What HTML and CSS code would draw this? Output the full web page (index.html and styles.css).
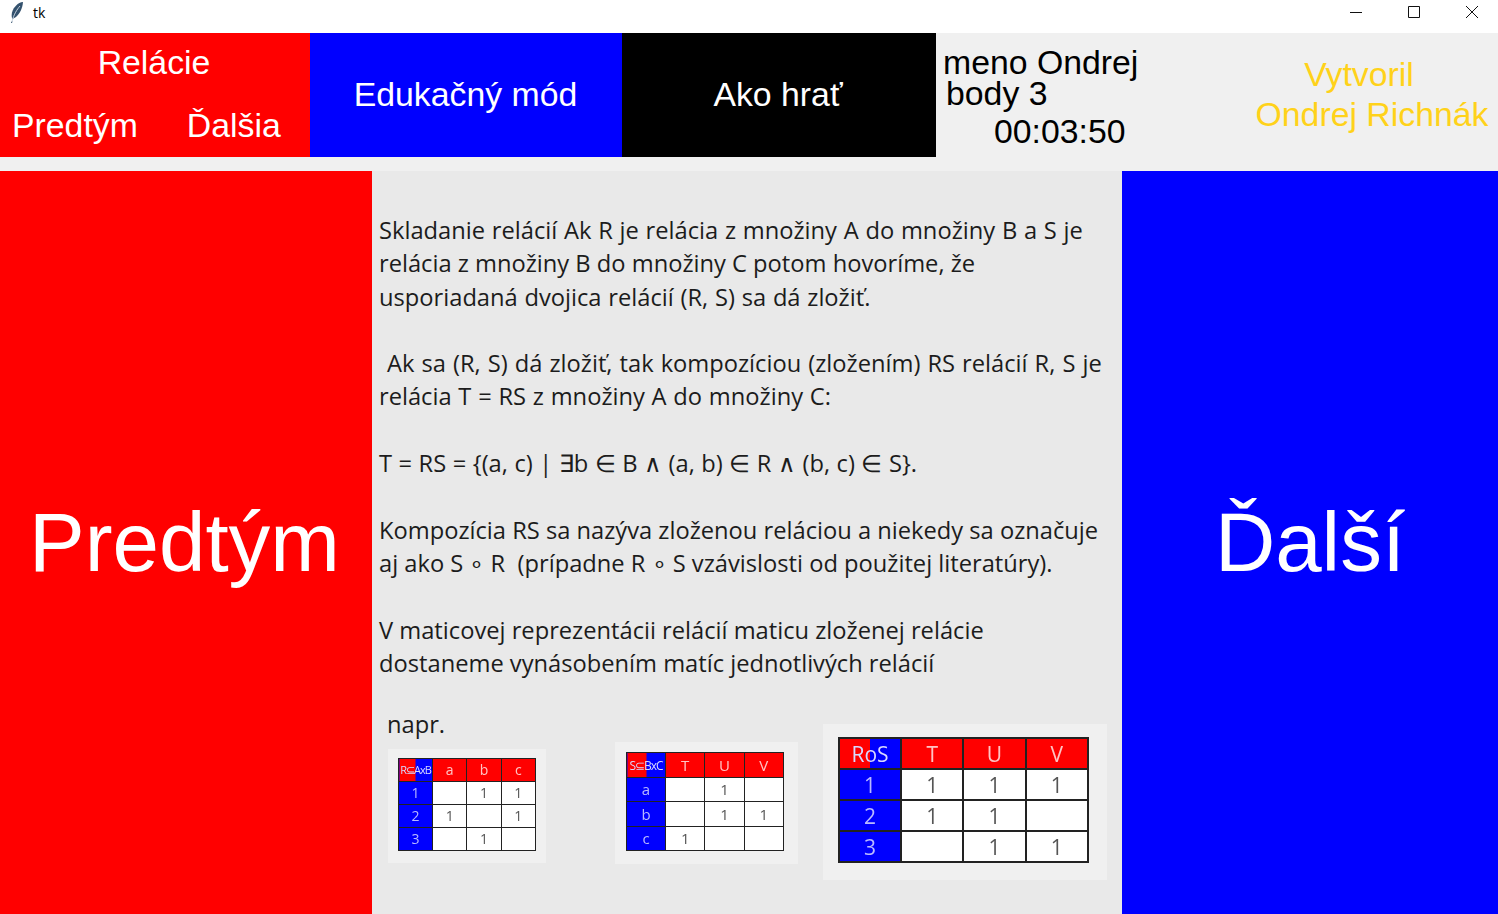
FILE: index.html
```html
<!DOCTYPE html>
<html>
<head>
    <title>tk</title>
    <meta name="viewport" content="width=device-width, initial-scale=1">
    <link rel="stylesheet" href="styles.css">
</head>
<body>
    <div class="titlebar">
        <div class="title-left">
            <svg class="feather" width="16" height="22" viewBox="0 0 16 22">
                <path d="M14 1C9 1.500 4.500 6 3 11.500C2.500 14 2.500 16.500 3.500 18L7 16C11 12.500 13.500 7 14 1Z" fill="#34526e"/>
                <path d="M11 5C8 8.500 5 13 3 20.500" stroke="#c8d4e0" stroke-width="1" fill="none"/>
                <path d="M3 20.500L2.500 22" stroke="#34526e" stroke-width="1" fill="none"/>
            </svg>
            <span>tk</span>
        </div>
        <div class="window-buttons">
            <svg width="14" height="14" viewBox="0 0 14 14"><path d="M1 7.500H13" stroke="#111" fill="none"/></svg>
            <svg width="14" height="14" viewBox="0 0 14 14"><path d="M1.500 1.500H12.500V12.500H1.500Z" stroke="#111" fill="none"/></svg>
            <svg width="14" height="14" viewBox="0 0 14 14"><path d="M1 1L13 13M13 1L1 13" stroke="#111" fill="none"/></svg>
        </div>
    </div>

    <div class="topbar">
        <div class="nav-cell red">
            <div class="nav-title">Relácie</div>
            <div class="nav-links">
                <span>Predtým</span>
                <span>Ďalšia</span>
            </div>
        </div>
        <div class="mode-cell mode-edu blue">Edukačný mód</div>
        <div class="mode-cell mode-help black">Ako hrať</div>
        <div class="player">
            <div>meno Ondrej</div>
            <div class="player-points">body 3</div>
            <div class="player-time">00:03:50</div>
        </div>
        <div class="author">
            <div class="author-first">Vytvoril</div>
            <div>Ondrej Richnák</div>
        </div>
    </div>

    <div class="main">
        <div class="side-button side-prev red">Predtým</div>
        <div class="content">
            <p><span class="loose">Skladanie relácií Ak R je relácia z množiny A do množiny B a S je</span><br>
            relácia z množiny B do množiny C potom hovoríme, že<br>
            <span class="loose">usporiadaná dvojica relácií (R, S) sa dá zložiť.</span></p>
            <p><span class="indent">Ak sa (R, S) dá zložiť, tak kompozíciou (zložením) RS relácií R, S je</span><br>
            <span class="loose">relácia T = RS z množiny A do množiny C:</span></p>
            <p><span class="math">T = RS = {(a, c) | ∃b ∈ B ∧ (a, b) ∈ R ∧ (b, c) ∈ S}.</span></p>
            <p>Kompozícia RS sa nazýva zloženou reláciou a niekedy sa označuje<br>
            aj ako S ∘ R&nbsp; (prípadne R ∘ S vzávislosti od použitej literatúry).</p>
            <p>V maticovej reprezentácii relácií maticu zloženej relácie<br>
            dostaneme vynásobením matíc jednotlivých relácií</p>

            <div class="examples">
                <div class="example-first">
                    <div class="napr">napr.</div>
                    <div class="matrix-box box-r">
                        <table class="matrix small-r">
                            <tr><th class="corner">R⊆AxB</th><th>a</th><th>b</th><th>c</th></tr>
                            <tr><th>1</th><td></td><td>1</td><td>1</td></tr>
                            <tr><th>2</th><td>1</td><td></td><td>1</td></tr>
                            <tr><th>3</th><td></td><td>1</td><td></td></tr>
                        </table>
                    </div>
                </div>
                <div class="matrix-box box-s">
                    <table class="matrix small-s">
                        <tr><th class="corner">S⊆BxC</th><th>T</th><th>U</th><th>V</th></tr>
                        <tr><th>a</th><td></td><td>1</td><td></td></tr>
                        <tr><th>b</th><td></td><td>1</td><td>1</td></tr>
                        <tr><th>c</th><td>1</td><td></td><td></td></tr>
                    </table>
                </div>
                <div class="matrix-box box-ros">
                    <table class="matrix large">
                        <tr><th class="corner">RoS</th><th>T</th><th>U</th><th>V</th></tr>
                        <tr><th>1</th><td>1</td><td>1</td><td>1</td></tr>
                        <tr><th>2</th><td>1</td><td>1</td><td></td></tr>
                        <tr><th>3</th><td></td><td>1</td><td>1</td></tr>
                    </table>
                </div>
            </div>
        </div>
        <div class="side-button side-next blue">Ďalší</div>
    </div>
</body>
</html>
```

FILE: styles.css
```css
html, body {
    margin: 0;
    height: 100%;
    overflow: hidden;
}

body {
    background-color: #f0f0f0;
    color: #000;
    font-family: "Liberation Sans", Arial, sans-serif;
}

.red {
    background-color: #f00;
}

.blue {
    background-color: #00f;
}

.black {
    background-color: #000;
}

/* Window title bar */
.titlebar {
    height: 33px;
    background-color: #fff;
    display: flex;
    justify-content: space-between;
    align-items: center;
}

.title-left {
    display: flex;
    align-items: center;
    gap: 8px;
    padding-left: 9px;
    font-family: "Open Sans", sans-serif;
    font-size: 14px;
    margin-top: -9px;
}

.window-buttons {
    display: flex;
    gap: 44px;
    padding-right: 19px;
    margin-top: -9px;
}

/* Top row */
.topbar {
    height: 138px;
    display: flex;
    align-items: flex-start;
    font-size: 33.8px;
}

.nav-cell {
    width: 310px;
    height: 124px;
    color: #fff;
    box-sizing: border-box;
    padding-top: 9px;
}

.nav-title {
    text-align: center;
    line-height: 40px;
    padding-right: 2px;
}

.nav-links {
    display: flex;
    gap: 49px;
    padding-left: 12px;
    margin-top: 23px;
    line-height: 40px;
}

.mode-cell {
    height: 124px;
    color: #fff;
    display: flex;
    align-items: center;
    justify-content: center;
    padding-bottom: 2px;
    box-sizing: border-box;
}

.mode-edu {
    width: 312px;
    padding-right: 1px;
}

.mode-help {
    width: 314px;
    padding-right: 2px;
}

.player {
    width: 300px;
    padding: 14px 0 0 7px;
    box-sizing: border-box;
    line-height: 31px;
    height: 124px;
}

.player-points {
    padding-left: 3px;
}

.player-time {
    padding-left: 51px;
    margin-top: 7px;
}

.author {
    flex: 1;
    color: #ffd21a;
    text-align: center;
    line-height: 40px;
    padding-top: 21px;
    padding-left: 10px;
}

.author-first {
    padding-right: 26px;
}

/* Main area */
.main {
    height: 743px;
    display: flex;
}

.side-button {
    color: #fff;
    font-size: 83.5px;
    display: flex;
    align-items: center;
    justify-content: center;
}

.side-prev {
    width: 372px;
    padding-right: 3px;
    box-sizing: border-box;
}

.side-next {
    width: 376px;
}

.content {
    width: 750px;
    box-sizing: border-box;
    background-color: #e9e9e9;
    color: #1c1c1c;
    padding: 43px 0 0 7px;
    font-family: "Open Sans", sans-serif;
    font-size: 23.7px;
    line-height: 33.3px;
}

.content p {
    margin: 0 0 33.3px 0;
    white-space: nowrap;
}

.loose {
    word-spacing: 0.6px;
}

.math {
    word-spacing: 0.35px;
}

.indent {
    padding-left: 8px;
    word-spacing: 0.9px;
}

/* Matrices at the bottom */
.examples {
    display: flex;
    align-items: flex-start;
    margin-top: -5px;
}

.example-first {
    padding-left: 8px;
}

.napr {
    line-height: 33px;
}

.matrix-box {
    background-color: #f0f0f0;
    box-sizing: border-box;
}

.box-r {
    width: 158px;
    height: 114px;
    padding: 9px 10px;
    margin: 8px 0 0 1px;
}

.box-s {
    width: 183px;
    height: 122px;
    padding: 10px 11px;
    margin: 34px 0 0 69px;
}

.box-ros {
    width: 284px;
    height: 156px;
    padding: 13px 15px;
    margin: 16px 0 0 25px;
}

.matrix {
    border-collapse: collapse;
    table-layout: fixed;
    background-color: #fff;
    filter: blur(0.5px);
}

.matrix th, .matrix td {
    border: 1px solid #222;
    padding: 0;
    text-align: center;
    font-weight: normal;
    overflow: hidden;
    color: #555;
}

.matrix th {
    background-color: #00f;
    color: #b9b9ff;
}

.matrix tr:first-child th {
    background-color: #f00;
    color: #ffc4c4;
}

.matrix tr:first-child th.corner {
    background: linear-gradient(90deg, #f00 50%, #00f 50%);
    color: #d8d8ff;
}

.small-r {
    width: 138px;
    height: 93px;
    font-size: 14px;
    line-height: 14px;
}

.small-r th.corner {
    font-size: 11px;
    letter-spacing: -1px;
}

.small-s {
    width: 158px;
    height: 99px;
    font-size: 15px;
    line-height: 15px;
}

.small-s th.corner {
    font-size: 12px;
    letter-spacing: -1px;
}

.large {
    width: 251px;
    height: 126px;
    font-size: 21px;
    line-height: 22px;
}

.large th, .large td {
    border-width: 2px;
}

.small-r th:first-child {
    width: 33px;
}

.small-s th:first-child {
    width: 38px;
}

.large th:first-child {
    width: 60px;
}
```
